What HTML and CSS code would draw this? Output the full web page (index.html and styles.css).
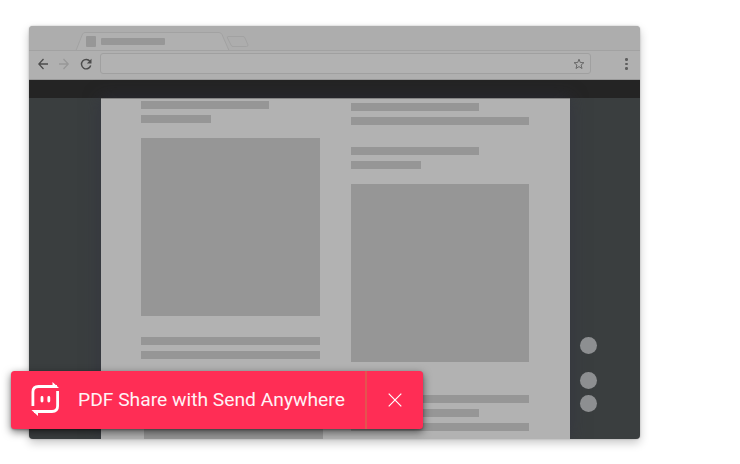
FILE: index.html
```
<!DOCTYPE html>
<html lang="en">
<head>
<meta charset="utf-8">
<title>PDF Share</title>
<link rel="stylesheet" href="styles.css">
</head>
<body>
<main class="scene">
  <section class="browser">
    <header class="tabs">
      <svg width="611" height="25" viewBox="0 0 611 25" fill="none" stroke="#a2a2a2">
        <path class="tab-fill" d="M47 24.5 53.500 8Q54.500 6.500 56 6.500H190Q192 6.500 193 8.500L200 24.500"/>
        <path d="M0 24.500H611M47 24.500 53.500 8Q54.500 6.500 56 6.500H190Q192 6.500 193 8.500L200 24.500"/>
        <path d="M199 10.500H214Q215.500 10.500 216 12L219 19Q219 20.500 217.500 20.500H204Q202.500 20.500 202 19L198.500 12Q198 10.500 199 10.500Z"/>
      </svg>
      <div class="tab-label"><i class="favicon"></i><i class="tab-title"></i></div>
    </header>
    <div class="toolbar">
      <svg class="nav" width="60" height="14" viewBox="0 0 60 14" fill="none" stroke-width="1.300">
        <path stroke="#4c4c4c" d="M10 7H1M5.500 2 .8 7l4.700 5"/>
        <path stroke="#989898" d="M21 7h9M25.500 2l4.700 5-4.700 5"/>
        <path stroke="#4c4c4c" stroke-width="1.400" d="M52 4.400A4.700 4.700 0 1 0 52.700 8.500"/>
        <path fill="#4c4c4c" d="M53.500 1.800V6.500H48.800Z"/>
      </svg>
      <div class="address">
        <svg width="12" height="12" viewBox="0 0 12 12" fill="none" stroke="#686868"><path d="M6 1.200 7.300 4.500 10.900 4.700 8.100 7 9 10.500 6 8.600 3 10.500 3.900 7 1.100 4.700 4.700 4.500Z"/></svg>
      </div>
      <div class="dots"><i></i><i></i><i></i></div>
    </div>
    <div class="viewer-bar"></div>
    <div class="viewer">
      <div class="page">
        <div class="column left">
          <i class="line medium"></i><i class="line short"></i>
          <i class="block"></i>
          <i class="line"></i><i class="line"></i>
          <i class="block next"></i>
        </div>
        <div class="column right">
          <i class="line medium"></i><i class="line"></i>
          <i class="line medium para"></i><i class="line short"></i>
          <i class="block"></i>
          <i class="line after"></i><i class="line medium"></i><i class="line"></i>
        </div>
      </div>
      <div class="controls"><i></i><i></i><i></i></div>
    </div>
  </section>
  <div class="banner">
    <div class="share">
      <svg width="30" height="36" viewBox="0 0 30 36" fill="none" stroke="#fff" stroke-width="2.800">
        <path d="M1.900 25V11Q1.900 5.500 7.500 5.500H26M26.600 10V25Q26.600 30.500 21 30.500H3"/>
        <path fill="#fff" stroke="none" d="M21.500 1 28 7H21.500ZM7 35 .5 29H7Z"/>
        <path stroke-linecap="round" d="M11 16.500v3.500M17.800 16.500v3.500"/>
      </svg>
      <span class="message">PDF Share with Send Anywhere</span>
    </div>
    <div class="close"><svg width="14" height="14" viewBox="0 0 14 14" stroke="#fff" stroke-width="1.200"><path d="M.7.7 13.300 13.300M13.300.7.7 13.300"/></svg></div>
  </div>
</main>
</body>
</html>
```
FILE: styles.css
```
* { box-sizing: border-box; }
body { margin: 0; background: #fff; font-family: Roboto, sans-serif; }
i, svg { display: block; flex: none; }
.scene { position: relative; width: 740px; height: 464px; padding: 26px 0 0 29px; overflow: hidden; }
.browser { width: 611px; height: 412.500px; border-radius: 4px; overflow: hidden; background: #aeaeae; display: flex; flex-direction: column; box-shadow: 0 4px 10px rgba(0,0,0,.22), 0 0 2px rgba(0,0,0,.25); }
.tabs { position: relative; height: 25px; flex: none; background: #adadad; }
.tab-fill { fill: #b0b0b0; stroke: none; }
.tab-label { position: absolute; left: 56.5px; top: 10px; display: flex; align-items: center; gap: 5px; }
.favicon { width: 10.500px; height: 10.500px; background: #979797; border-radius: 1px; }
.tab-title { width: 64px; height: 6.500px; background: #979797; border-radius: 1px; }
.toolbar { height: 28.500px; flex: none; display: flex; align-items: center; padding: 0 10px 2px 9px; background: #b0b0b0; border-bottom: 1px solid #999; }
.nav { margin-right: 2px; }
.address { width: 491px; height: 21px; border: 1px solid #a0a0a0; border-radius: 3px; background: #b2b2b2; display: flex; align-items: center; justify-content: flex-end; padding-right: 5px; }
.dots { margin-left: 34px; display: flex; flex-direction: column; gap: 2px; }
.dots i { width: 2.500px; height: 2.500px; background: #5f5f5f; border-radius: 50%; }
.viewer-bar { height: 18.500px; flex: none; background: #242424; }
.viewer { flex: 1; min-height: 0; display: flex; background: #3a3e3f; padding-left: 72px; }
.page { width: 469px; flex: none; background: #b2b2b2; border-top: 1px solid #858585; display: flex; padding-left: 40px; box-shadow: 0 0 16px rgba(48,48,65,.6); }
.column { width: 179px; height: 340px; overflow: hidden; display: flex; flex-direction: column; gap: 6px; }
.left { width: 182px; padding-top: 2px; }
.right { margin-left: 28px; padding-top: 4.400px; }
.line { width: 178.500px; height: 8px; background: #969696; }
.medium { width: 128px; }
.short { width: 70px; }
.para { margin-top: 15.500px; }
.block { width: 178.500px; height: 178.500px; background: #969696; }
.left .block { margin: 8.500px 0 15px; }
.left .block.next { margin: 16px 0 0 3px; }
.right .block { height: 178px; margin-top: 9px; }
.right .line, .right .block { max-width: 178px; }
.after { margin-top: 27px; }
.controls { padding: 239px 0 0 10px; }
.controls i { width: 17px; height: 17px; background: #8d8f91; border-radius: 50%; margin-bottom: 6.500px; }
.controls i:first-child { margin-bottom: 17.500px; }
.banner { position: absolute; left: 10.500px; top: 371px; width: 412.500px; height: 58px; display: flex; background: #ff2d55; border-radius: 3.500px; box-shadow: 0 3px 8px rgba(0,0,0,.55), 0 1px 2px rgba(0,0,0,.25); }
.share { width: 356.500px; display: flex; align-items: center; padding: 0 0 2px 20.500px; border-right: 2px solid #e4534f; }
.message { margin-left: 17px; padding-top: 2px; color: #fff2f5; font-size: 19.250px; line-height: 24px; white-space: nowrap; }
.close { flex: 1; display: flex; align-items: center; justify-content: center; }
```
